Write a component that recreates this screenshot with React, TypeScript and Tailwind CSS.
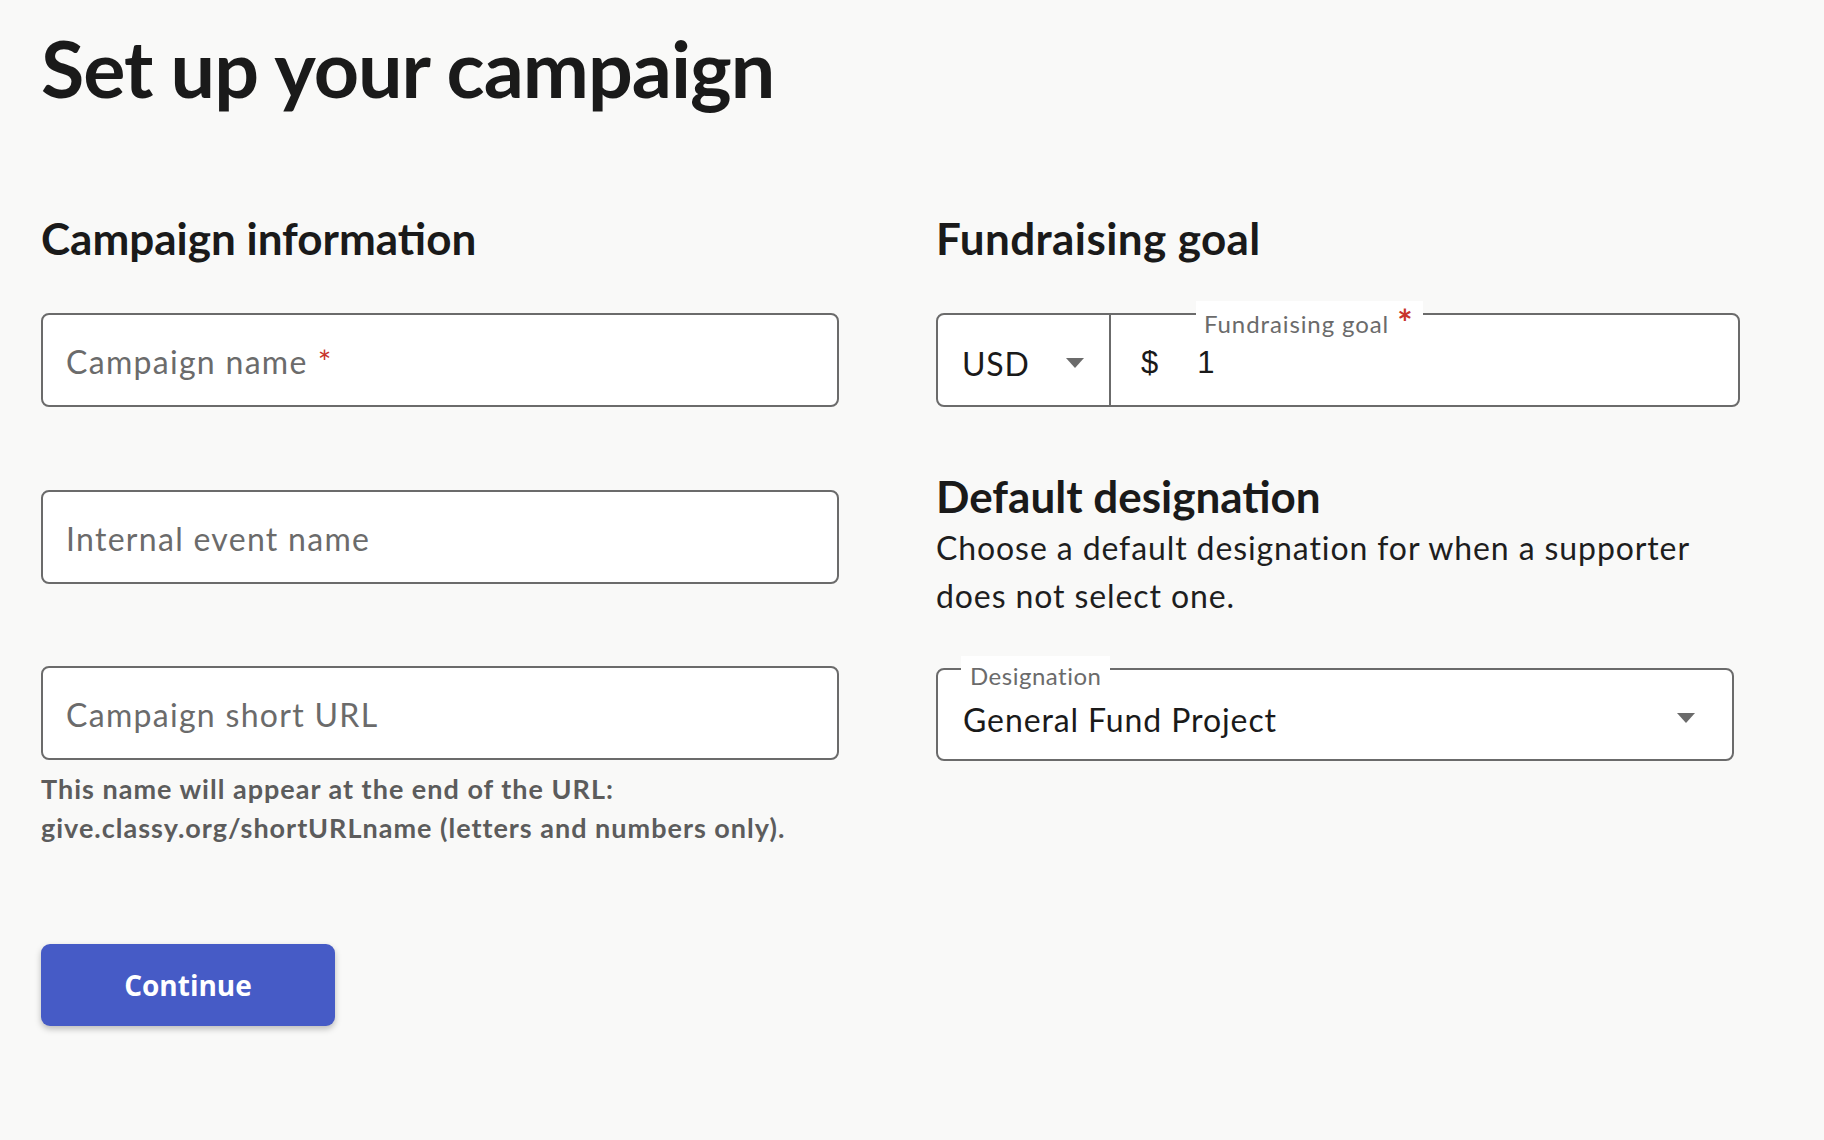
import React from "react";

const Caret = ({ className = "" }: { className?: string }) => (
  <svg width="18" height="10" viewBox="0 0 18 10" className={className}>
    <path d="M0 0 L18 0 L9 10 Z" fill="#6b6b6b" />
  </svg>
);

const TextField = ({ placeholder, required }: { placeholder: string; required?: boolean }) => (
  <div className="h-[94px] w-full rounded-[8px] border-2 border-[#6b6b6b] bg-white flex items-center pl-[23px]">
    <span className="text-[32px] tracking-[1.3px] text-[#6b6b6b] pt-[4px]">
      {placeholder}
      {required && <span className="text-[#c8332b] ml-[10px]">*</span>}
    </span>
  </div>
);

export default function App() {
  return (
    <div
      className="min-h-[1140px] w-full bg-[#f9f9f8] text-[#1a1a1a] pl-[41px] pt-[28px]"
      style={{ fontFamily: "Lato, 'Noto Sans', sans-serif" }}
    >
      <h1 className="text-[79px] leading-none font-bold tracking-[-1px]">Set up your campaign</h1>

      <div className="flex gap-[97px] mt-[109px]">
        {/* Left column */}
        <div className="w-[798px] flex flex-col">
          <h2 className="text-[44px] leading-none font-bold">Campaign information</h2>
          <div className="mt-[53px]">
            <TextField placeholder="Campaign name" required />
          </div>
          <div className="mt-[83px]">
            <TextField placeholder="Internal event name" />
          </div>
          <div className="mt-[82px]">
            <TextField placeholder="Campaign short URL" />
          </div>
          <p className="mt-[9px] text-[27px] leading-[39px] font-bold tracking-[1px] text-[#5c5c5c]">
            This name will appear at the end of the URL:
            <br />
            give.classy.org/shortURLname (letters and numbers only).
          </p>
          <button
            className="mt-[97px] w-[294px] h-[82px] rounded-[9px] bg-[#465bc6] text-white text-[28px] font-bold shadow-[0_3px_6px_rgba(0,0,0,0.25)]"
            style={{ fontFamily: "'Open Sans', 'Noto Sans', sans-serif" }}
          >
            Continue
          </button>
        </div>

        {/* Right column */}
        <div className="w-[804px] flex flex-col">
          <h2 className="text-[44px] leading-none font-bold tracking-[0.4px]">Fundraising goal</h2>

          <div className="mt-[53px] relative h-[94px] w-[804px] rounded-[8px] border-2 border-[#6b6b6b] bg-white flex">
            <div className="w-[173px] h-full border-r-2 border-[#6b6b6b] flex items-center pl-[24px] pr-[25px] justify-between">
              <span className="text-[32px] tracking-[0.8px] text-[#1a1a1a] pt-[8px]">USD</span>
              <Caret className="mt-[6px]" />
            </div>
            <div className="flex-1 flex items-center pl-[30px] pt-[7px]">
              <span className="text-[31px] text-[#1a1a1a]" style={{ fontFamily: "'Liberation Sans', sans-serif" }}>$</span>
              <span className="text-[31px] text-[#1a1a1a] ml-[39px]" style={{ fontFamily: "'Liberation Sans', sans-serif" }}>1</span>
            </div>
            <div className="absolute left-[258px] top-[-14px] bg-white pl-[8px] pr-[10px] pt-[8px] leading-[30px] flex items-start">
              <span className="text-[24px] tracking-[0.9px] text-[#6b6b6b]">Fundraising goal</span>
              <span className="text-[36px] leading-[26px] font-bold text-[#c8332b] ml-[8px]">*</span>
            </div>
          </div>

          <h2 className="mt-[67px] text-[44px] leading-none font-bold">Default designation</h2>
          <p className="mt-[6px] text-[32px] leading-[48px] tracking-[0.9px] text-[#1e1e1e]">
            Choose a default designation for when a supporter
            <br />
            does not select one.
          </p>

          <div className="mt-[48px] relative h-[93px] w-[798px] rounded-[8px] border-2 border-[#6b6b6b] bg-white flex items-center justify-between pl-[25px] pr-[37px]">
            <span className="text-[32px] tracking-[0.9px] text-[#1a1a1a] mt-[10px]">General Fund Project</span>
            <Caret className="mt-[7px]" />
            <div className="absolute left-[23px] top-[-14px] bg-white px-[9px] pt-[5px] leading-[30px]">
              <span className="text-[24px] tracking-[0.5px] text-[#6b6b6b]">Designation</span>
            </div>
          </div>
        </div>
      </div>
    </div>
  );
}
